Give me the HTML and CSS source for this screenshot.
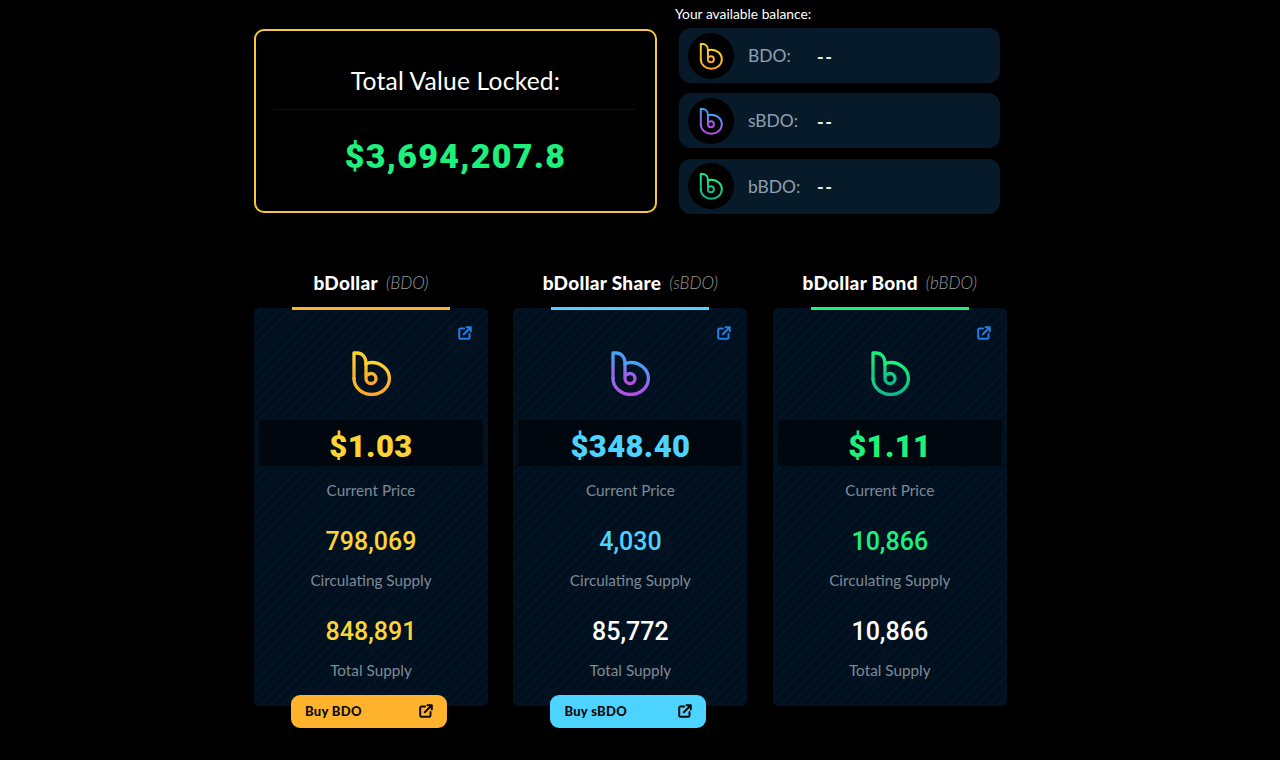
FILE: index.html
```html
<!DOCTYPE html>
<html lang="en">
<head>
<meta charset="utf-8">
<title>bDollar</title>
<link rel="stylesheet" href="styles.css">
</head>
<body>
<svg class="defs" width="0" height="0" aria-hidden="true">
  <defs>
    <linearGradient id="gold" x1="0" y1="0" x2="0" y2="1"><stop offset="0" stop-color="#fcd42f"/><stop offset="1" stop-color="#fba62a"/></linearGradient>
    <linearGradient id="violet" x1="0" y1="0" x2="0" y2="1"><stop offset="0" stop-color="#42a6f5"/><stop offset="1" stop-color="#b94be6"/></linearGradient>
    <linearGradient id="green" x1="0" y1="0" x2="0" y2="1"><stop offset="0" stop-color="#1ef07c"/><stop offset="1" stop-color="#10b98c"/></linearGradient>
    <symbol id="logo-gold" viewBox="0 0 42 46"><g fill="none" stroke="url(#gold)" stroke-width="3.300" stroke-linejoin="round" stroke-linecap="round"><path d="M3 28.500V3H6C11 3 15 7 15 13V28.500A5 5 0 1 0 20 23.500C18 23.500 16.500 24.500 15 26"/><path d="M3 28.500A17.700 16 0 1 0 20.700 12.500C18.500 12.500 16.500 13 15 14"/></g></symbol>
    <symbol id="logo-violet" viewBox="0 0 42 46"><g fill="none" stroke="url(#violet)" stroke-width="3.300" stroke-linejoin="round" stroke-linecap="round"><path d="M3 28.500V3H6C11 3 15 7 15 13V28.500A5 5 0 1 0 20 23.500C18 23.500 16.500 24.500 15 26"/><path d="M3 28.500A17.700 16 0 1 0 20.700 12.500C18.500 12.500 16.500 13 15 14"/></g></symbol>
    <symbol id="logo-green" viewBox="0 0 42 46"><g fill="none" stroke="url(#green)" stroke-width="3.300" stroke-linejoin="round" stroke-linecap="round"><path d="M3 28.500V3H6C11 3 15 7 15 13V28.500A5 5 0 1 0 20 23.500C18 23.500 16.500 24.500 15 26"/><path d="M3 28.500A17.700 16 0 1 0 20.700 12.500C18.500 12.500 16.500 13 15 14"/></g></symbol>
    <symbol id="ext" viewBox="0 0 14 14"><g fill="none" stroke="currentColor" stroke-width="2" stroke-linecap="round" stroke-linejoin="round"><path d="M6 2.500H2.500A1.300 1.300 0 0 0 1.200 3.800V11.500A1.300 1.300 0 0 0 2.500 12.800H10.200A1.300 1.300 0 0 0 11.500 11.500V8"/><path d="M5.800 8.200L12.800 1.200M8.500 1.200H12.800V5.500"/></g></symbol>
  </defs>
</svg>
<main class="page">
  <section class="top">
    <div class="tvl">
      <div class="tvl-title">Total Value Locked:</div>
      <div class="tvl-rule"></div>
      <div class="tvl-value">$3,694,207.8</div>
    </div>
    <div class="balance">
      <div class="balance-title">Your available balance:</div>
      <div class="balance-row">
        <span class="coin"><svg class="coin-logo"><use href="#logo-gold"/></svg></span>
        <span class="coin-name">BDO:</span><span class="coin-amount">--</span>
      </div>
      <div class="balance-row">
        <span class="coin"><svg class="coin-logo"><use href="#logo-violet"/></svg></span>
        <span class="coin-name">sBDO:</span><span class="coin-amount">--</span>
      </div>
      <div class="balance-row">
        <span class="coin"><svg class="coin-logo"><use href="#logo-green"/></svg></span>
        <span class="coin-name">bBDO:</span><span class="coin-amount">--</span>
      </div>
    </div>
  </section>
  <section class="columns">
    <article class="col col-gold">
      <h2 class="col-head"><b>bDollar</b><i>(BDO)</i></h2>
      <div class="card">
        <span class="bar"></span>
        <svg class="card-ext"><use href="#ext"/></svg>
        <svg class="card-logo"><use href="#logo-gold"/></svg>
        <div class="price">$1.03</div>
        <div class="label">Current Price</div>
        <div class="num">798,069</div>
        <div class="label">Circulating Supply</div>
        <div class="num">848,891</div>
        <div class="label">Total Supply</div>
        <a class="buy" href="#"><span>Buy BDO</span><svg class="buy-ext"><use href="#ext"/></svg></a>
      </div>
    </article>
    <article class="col col-blue">
      <h2 class="col-head"><b>bDollar Share</b><i>(sBDO)</i></h2>
      <div class="card">
        <span class="bar"></span>
        <svg class="card-ext"><use href="#ext"/></svg>
        <svg class="card-logo"><use href="#logo-violet"/></svg>
        <div class="price">$348.40</div>
        <div class="label">Current Price</div>
        <div class="num">4,030</div>
        <div class="label">Circulating Supply</div>
        <div class="num num-white">85,772</div>
        <div class="label">Total Supply</div>
        <a class="buy" href="#"><span>Buy sBDO</span><svg class="buy-ext"><use href="#ext"/></svg></a>
      </div>
    </article>
    <article class="col col-green">
      <h2 class="col-head"><b>bDollar Bond</b><i>(bBDO)</i></h2>
      <div class="card">
        <span class="bar"></span>
        <svg class="card-ext"><use href="#ext"/></svg>
        <svg class="card-logo"><use href="#logo-green"/></svg>
        <div class="price">$1.11</div>
        <div class="label">Current Price</div>
        <div class="num">10,866</div>
        <div class="label">Circulating Supply</div>
        <div class="num num-white">10,866</div>
        <div class="label">Total Supply</div>
      </div>
    </article>
  </section>
</main>
</body>
</html>
```

FILE: styles.css
```css
* { box-sizing: border-box; }
html, body { margin: 0; padding: 0; height: 760px; overflow: hidden; background: #000; }
body { font-family: "Lato", "Noto Sans", sans-serif; color: #fff; }
.defs { display: block; height: 0; }
.page { width: 752.800px; margin-left: 254px; padding-top: 7px; }

.top { display: flex; height: 207px; }
.tvl {
  width: 403px; height: 184px; margin-top: 22px;
  border: 2px solid #f5c93a; border-radius: 10px; background: #000;
  display: flex; flex-direction: column; align-items: center; padding: 0 19px;
}
.tvl-title { font-size: 24.600px; line-height: 30px; margin-top: 35px; letter-spacing: 0.2px; }
.tvl-rule { width: 100%; height: 1px; background: #07131d; margin-top: 13px; }
.tvl-value { font-family: "Roboto", "Lato", sans-serif; font-size: 34px; line-height: 40px; font-weight: 900; color: #1ef07c; margin-top: 26px; letter-spacing: 1.300px; }

.balance { width: 325px; margin-left: 18px; }
.balance-title { font-size: 13.800px; line-height: 16px; margin-top: -1px; margin-bottom: 6px; }
.balance-row {
  width: 321px; height: 55px; margin: 0 0 10.250px 4px;
  background: #071a2a; border-radius: 12px;
  display: flex; align-items: center; padding-left: 9px;
}
.coin { width: 46px; height: 46px; border-radius: 50%; background: #000; display: flex; align-items: center; justify-content: center; flex: none; }
.coin-logo { width: 25px; height: 28px; display: block; }
.coin-name { font-size: 17.400px; color: #8fa0ae; width: 69px; margin-left: 14px; }
.coin-amount { font-size: 18px; font-weight: 700; color: #e8eef2; letter-spacing: 1.500px; padding-top: 2px; }

.columns { display: flex; justify-content: space-between; margin-top: 51px; }
.col { width: 234px; }
.col-head { margin: 0; height: 43px; display: flex; justify-content: center; align-items: center; gap: 8px; font-size: 19px; font-weight: 400; padding-bottom: 8px; }
.col-head b { font-weight: 900; letter-spacing: 0.3px; }
.col-head i { font-size: 17px; color: #9a9a9a; font-weight: 300; }

.card {
  position: relative; height: 398px; margin-top: 0; padding-top: 42px;
  border-radius: 5px;
  background-color: #01101f;
  background-image: repeating-linear-gradient(135deg, transparent 0, transparent 4.500px, #061626 5.750px, transparent 7px);
  display: flex; flex-direction: column; align-items: center;
}
.bar { position: absolute; top: -1px; left: 38px; width: 158px; height: 3px; }
.card-ext { position: absolute; top: 18px; right: 16px; width: 14px; height: 14px; color: #1f7fe6; }
.card-logo { width: 42px; height: 46px; display: block; margin-bottom: 24px; transform: translateX(1px); }
.price {
  width: 224px; height: 46px; background: #01070e;
  font-family: "Roboto", "Lato", sans-serif;
  font-size: 31px; line-height: 54px; font-weight: 900; text-align: center; letter-spacing: 0.400px;
}
.label { font-size: 15.300px; line-height: 20px; color: #7f8a94; text-align: center; margin-top: 14px; height: 20px; }
.num { font-family: "Roboto", "Lato", sans-serif; font-size: 25px; line-height: 30px; font-weight: 500; text-align: center; margin-top: 27px; height: 30px; }
.num + .label { margin-top: 13px; }
.num-white { color: #fff !important; }

.buy {
  position: absolute; left: 37px; bottom: -22px; width: 156px; height: 33px;
  border-radius: 9px; color: #0a0a0a; text-decoration: none;
  display: flex; align-items: center; justify-content: space-between; padding: 0 14px 1px 14px;
  font-size: 13px; font-weight: 900; letter-spacing: 0.3px;
}
.buy-ext { width: 14px; height: 14px; color: #0a0a0a; }

.col-gold .bar, .col-gold .buy { background: #ffb32c; }
.col-gold .price, .col-gold .num { color: #fcd535; }
.col-blue .bar, .col-blue .buy { background: #4cd3ff; }
.col-blue .price, .col-blue .num { color: #4cd3ff; }
.col-green .bar { background: #1ef07c; }
.col-green .price, .col-green .num { color: #1ef07c; }
```
